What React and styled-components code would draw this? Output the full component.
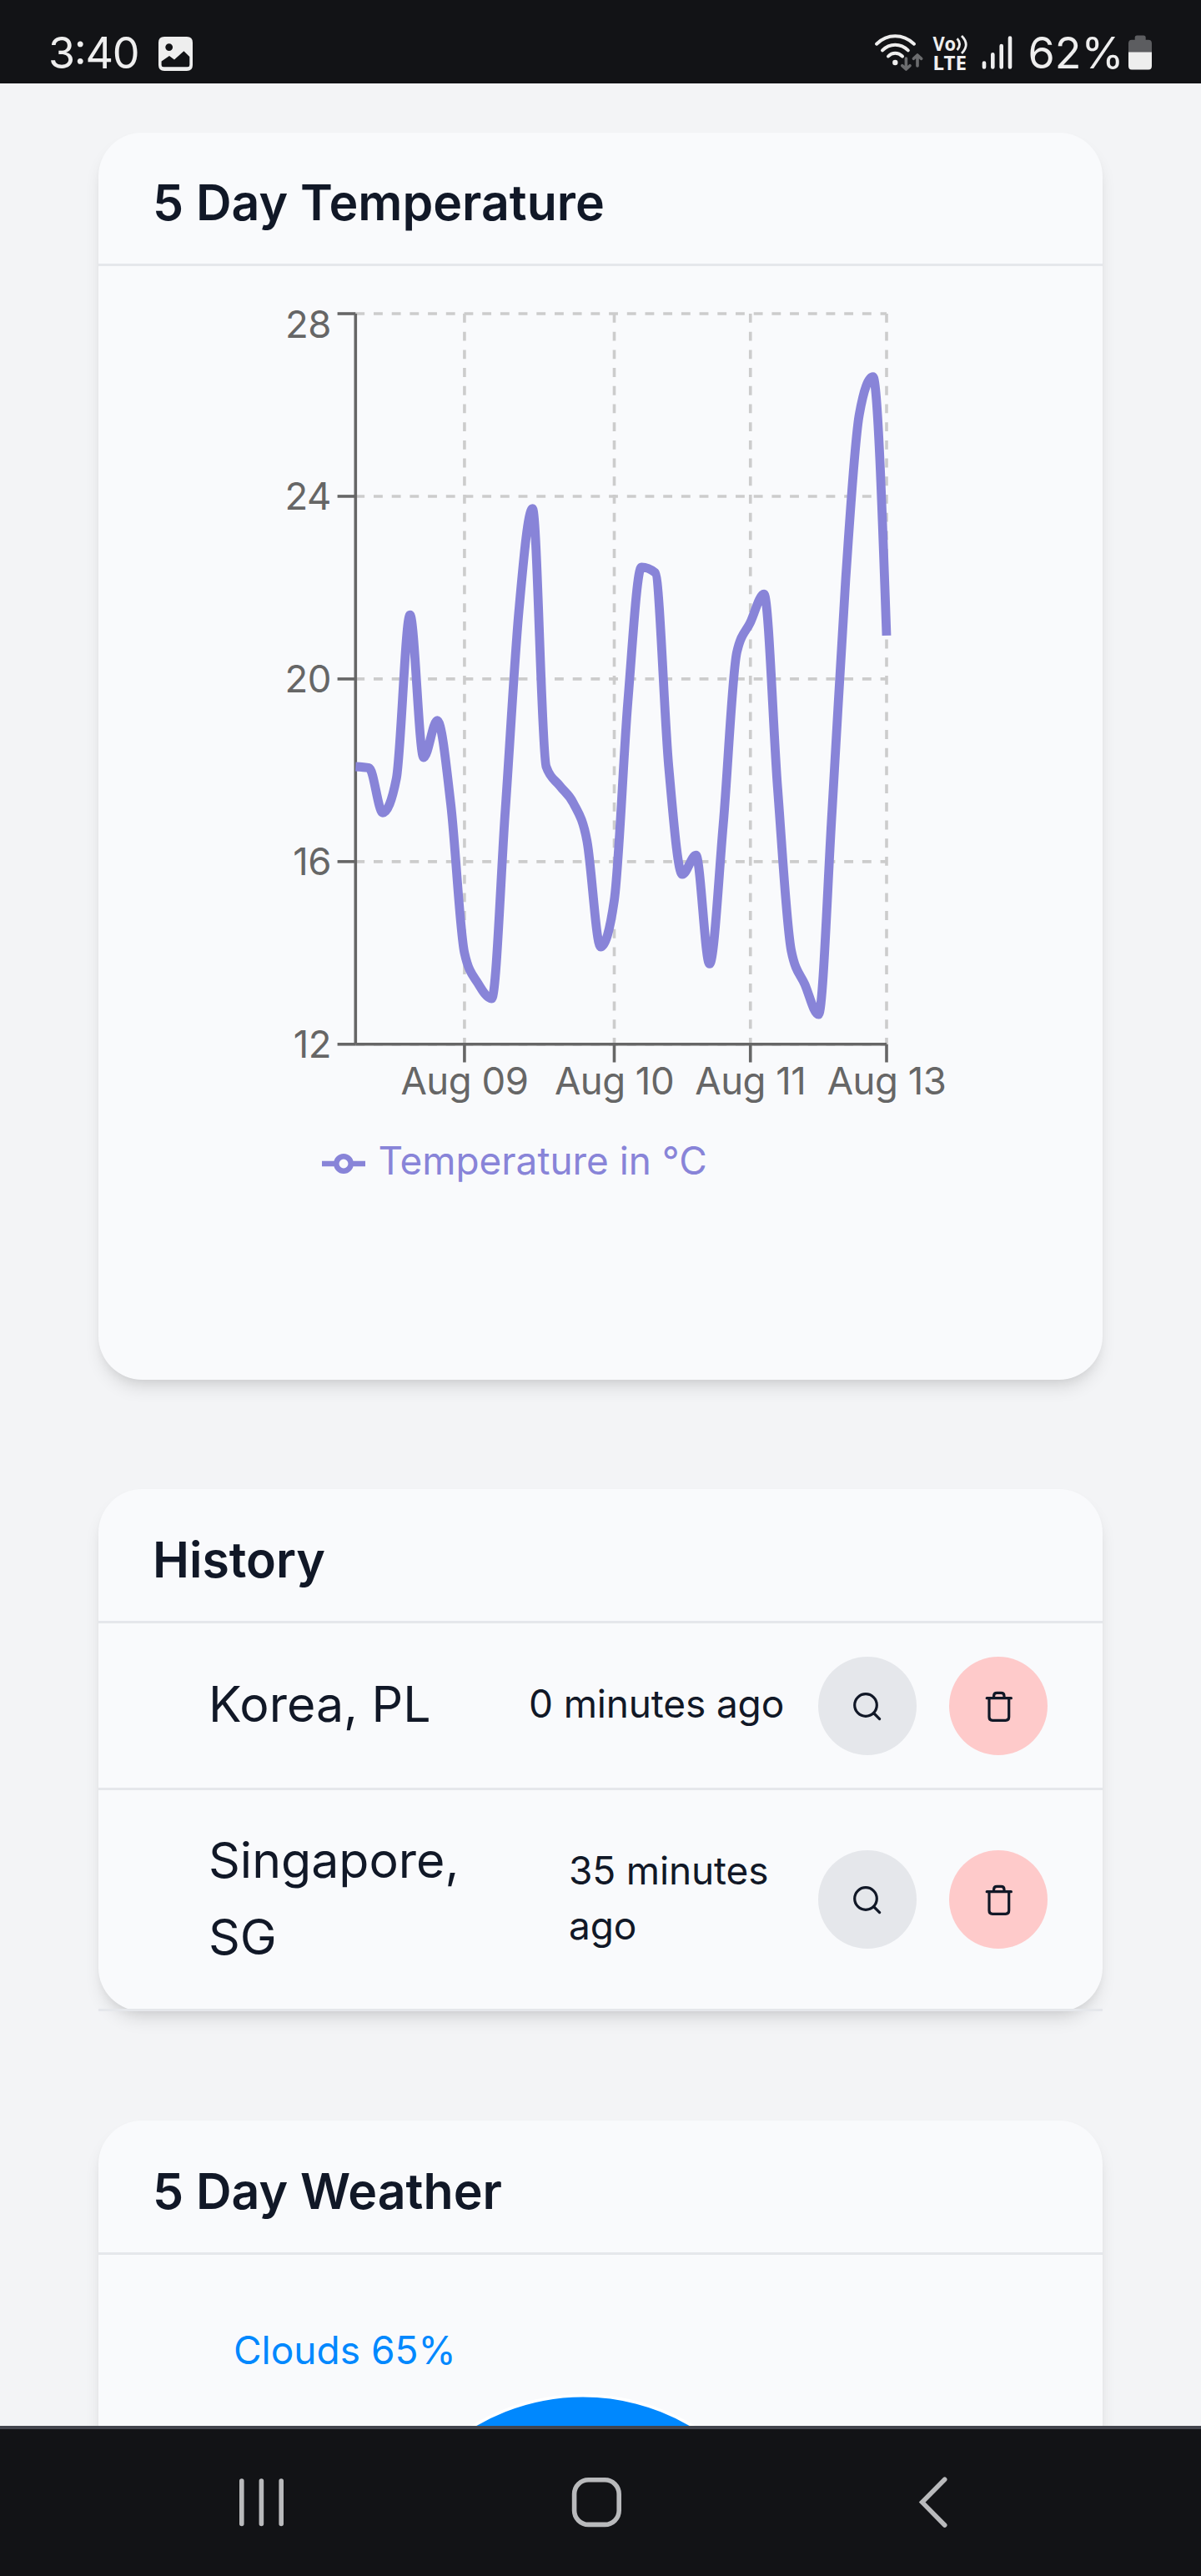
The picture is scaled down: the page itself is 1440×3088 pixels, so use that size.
import React from "react";
import styled, { createGlobalStyle } from "styled-components";

const GlobalStyle = createGlobalStyle`
  *, *::before, *::after { box-sizing: border-box; }
  body {
    margin: 0;
    background: #f3f4f6;
    font-family: Inter, "Liberation Sans", sans-serif;
    color: #111827;
  }
`;

const Screen = styled.div`
  display: flex;
  flex-direction: column;
  width: 1440px;
  height: 3088px;
  overflow: hidden;
  background: #f3f4f6;
`;

const StatusBar = styled.header`
  display: flex;
  justify-content: space-between;
  flex: none;
  height: 100px;
  background: #121316;
`;

const StatusIcons = styled.svg`
  display: block;
  height: 100px;
  width: ${(p) => p.$width}px;
`;

const Content = styled.main`
  flex: 1;
  min-height: 0;
  overflow: hidden;
  display: flex;
  flex-direction: column;
  gap: 131px;
  padding: 59px 118px 0;
`;

const Card = styled.section`
  flex: none;
  height: ${(p) => p.$height}px;
  border-radius: 52.5px;
  background: #f9fafc;
  box-shadow: 0 13px 20px -3px rgba(0, 0, 0, 0.1),
    0 7px 13px -7px rgba(0, 0, 0, 0.1);
`;

const CardTitle = styled.h2`
  margin: 0;
  height: ${(p) => (p.$tall ? 161 : 160)}px;
  padding: ${(p) => (p.$tall ? 39 : 38)}px 65px 0;
  border-bottom: 3px solid #e5e7eb;
  font-size: 59px;
  line-height: 92px;
  font-weight: 600;
`;

const Plot = styled.svg`
  display: block;
  width: 100%;
  height: ${(p) => p.$height}px;
`;

const HistoryRow = styled.div`
  display: flex;
  align-items: center;
  height: ${(p) => p.$height}px;
  padding: 0 66px 0 132px;
  border-bottom: 3px solid #e5e7eb;
`;

const Place = styled.div`
  width: ${(p) => p.$width}px;
  margin-right: auto;
  padding-bottom: 3px;
  font-size: 59px;
  line-height: 92px;
`;

const Ago = styled.div`
  width: ${(p) => p.$width}px;
  margin-right: 39px;
  padding-bottom: 5px;
  font-size: 46px;
  line-height: 66px;
  letter-spacing: -0.15px;
`;

const Actions = styled.div`
  display: flex;
  gap: 39px;
`;

const RoundButton = styled.button`
  display: block;
  width: 118px;
  height: 118px;
  padding: 0;
  border: 0;
  border-radius: 50%;
  background: ${(p) => (p.$danger ? "#fecaca" : "#e5e7eb")};
`;

const ButtonIcon = styled.svg`
  display: block;
  width: 118px;
  height: 118px;
  fill: none;
  stroke: #111827;
  stroke-width: 3.2;
  stroke-linecap: round;
  stroke-linejoin: round;
`;

const NavBar = styled.nav`
  flex: none;
  height: 180px;
  border-top: 4px solid #42444d;
  background: #121316;
`;

const temps = [
  18.08, 18.05, 17.07, 17.82, 21.4, 18.28, 19.09, 17.24, 14.0, 13.33, 13.0,
  17.13, 21.5, 23.73, 18.08, 17.66, 17.28, 16.45, 14.13, 15.15, 19.5, 22.45,
  22.33, 18.08, 15.72, 16.14, 13.76, 16.8, 20.58, 21.24, 21.86, 17.6, 14.05,
  13.31, 12.65, 17.13, 22.2, 25.8, 26.62, 20.95,
];

const area = { left: 426.3, right: 1063, top: 376, bottom: 1251.8 };
const xAt = (i) =>
  area.left + ((area.right - area.left) * i) / (temps.length - 1);
const yAt = (t) => area.top + ((28 - t) / 16) * (area.bottom - area.top);

// Cubic path whose tangents keep every segment monotone.
function monotonePath(points) {
  const n = points.length;
  const h = [];
  const s = [];
  for (let i = 0; i < n - 1; i++) {
    h.push(points[i + 1][0] - points[i][0]);
    s.push((points[i + 1][1] - points[i][1]) / h[i]);
  }
  const m = new Array(n).fill(0);
  for (let i = 1; i < n - 1; i++) {
    const p = (s[i - 1] * h[i] + s[i] * h[i - 1]) / (h[i - 1] + h[i]);
    m[i] =
      (Math.sign(s[i - 1]) + Math.sign(s[i])) *
        Math.min(Math.abs(s[i - 1]), Math.abs(s[i]), 0.5 * Math.abs(p)) || 0;
  }
  m[0] = (3 * s[0] - m[1]) / 2;
  m[n - 1] = (3 * s[n - 2] - m[n - 2]) / 2;
  let d = `M${points[0][0]},${points[0][1]}`;
  for (let i = 0; i < n - 1; i++) {
    const k = h[i] / 3;
    const [x0, y0] = points[i];
    const [x1, y1] = points[i + 1];
    d += `C${x0 + k},${y0 + k * m[i]},${x1 - k},${y1 - k * m[i + 1]},${x1},${y1}`;
  }
  return d;
}

const yTicks = [
  { value: 28, base: 404.8 },
  { value: 24, base: 610.8 },
  { value: 20, base: 829.7 },
  { value: 16, base: 1048.7 },
  { value: 12, base: 1268 },
];

const xTicks = [
  { label: "Aug 09", i: 8 },
  { label: "Aug 10", i: 19 },
  { label: "Aug 11", i: 29 },
  { label: "Aug 13", i: 39 },
];

function TemperatureChart() {
  const line = monotonePath(temps.map((t, i) => [xAt(i), yAt(t)]));
  return (
    <Plot $height={1335} viewBox="118 319 1204 1335">
      <g stroke="#ccc" strokeWidth="3.6" strokeDasharray="10.85 10.85">
        {yTicks.map(({ value }) => (
          <line key={value} x1={area.left} x2={area.right} y1={yAt(value)} y2={yAt(value)} />
        ))}
        {xTicks.map(({ i }) => (
          <line key={i} x1={xAt(i)} x2={xAt(i)} y1={area.top} y2={area.bottom} />
        ))}
      </g>
      <g stroke="#666" strokeWidth="3.6">
        <line x1={area.left} x2={area.left} y1={area.top} y2={area.bottom} />
        <line x1={area.left} x2={area.right} y1={area.bottom} y2={area.bottom} />
        {yTicks.map(({ value }) => (
          <line key={value} x1={area.left - 21.7} x2={area.left} y1={yAt(value)} y2={yAt(value)} />
        ))}
        {xTicks.map(({ i }) => (
          <line key={i} x1={xAt(i)} x2={xAt(i)} y1={area.bottom} y2={area.bottom + 21.7} />
        ))}
      </g>
      <g fill="#666" fontSize="45.5" letterSpacing="-0.5">
        {yTicks.map(({ value, base }) => (
          <text key={value} x="397" y={base} textAnchor="end">{value}</text>
        ))}
        {xTicks.map(({ label, i }) => (
          <text key={i} x={xAt(i)} y="1311.6" textAnchor="middle">{label}</text>
        ))}
      </g>
      <path d={line} fill="none" stroke="#8884d8" strokeWidth="10.8" />
      <g stroke="#8884d8" strokeWidth="6.5" fill="none">
        <path d="M386 1395H403.3M420.7 1395H438" />
        <circle cx="412" cy="1395" r="8.7" />
      </g>
      <text x="453.5" y="1407.5" fontSize="45.9" fill="#8884d8">Temperature in °C</text>
    </Plot>
  );
}

function WeatherChart() {
  return (
    <Plot $height={400} viewBox="118 2703 1204 400">
      <circle cx="699" cy="3126.7" r="255" fill="#0088fe" stroke="#fff" strokeWidth="3.6" />
      <text x="280" y="2833.7" fontSize="46" fill="#0088fe">Clouds 65%</text>
    </Plot>
  );
}

function SearchIcon() {
  return (
    <ButtonIcon viewBox="0 0 118 118">
      <circle cx="57" cy="58" r="13.3" />
      <path d="M67 68L73.6 74.6" />
    </ButtonIcon>
  );
}

function TrashIcon() {
  return (
    <ButtonIcon viewBox="0 0 118 118">
      <path d="M45.2 49.7H74.4M48 49.7V72.3Q48 76.3 52 76.3H67.7Q71.7 76.3 71.7 72.3V49.7M53.6 49.7V47Q53.6 43.3 57.3 43.3H62.3Q66 43.3 66 47V49.7" />
    </ButtonIcon>
  );
}

const history = [
  { place: "Korea, PL", placeWidth: 300, ago: "0 minutes ago", agoWidth: 308, height: 200 },
  { place: "Singapore, SG", placeWidth: 330, ago: "35 minutes ago", agoWidth: 260, height: 265 },
];

export default function App() {
  return (
    <Screen>
      <GlobalStyle />
      <StatusBar>
        <StatusIcons $width={400} viewBox="0 0 400 100" fill="#eee">
          <text x="58" y="82" fontSize="52" textLength="109.5">3:40</text>
          <path
            fillRule="evenodd"
            d="M197 44H224Q231 44 231 51V78Q231 85 224 85H197Q190 85 190 78V51Q190 44 197 44ZM193.6 73.5V78Q193.6 80.3 196 80.3H225Q227.3 80.3 227.3 78V68L220.4 61.3L209 71.5L203 67ZM202.7 52.2A4.4 4.4 0 1 0 202.7 61A4.4 4.4 0 1 0 202.7 52.2Z"
          />
        </StatusIcons>
        <StatusIcons $width={440} viewBox="1000 0 440 100" fill="#eee">
          <g fill="none" stroke="#eee" strokeWidth="4" strokeLinecap="round">
            <path d="M1051 52.7Q1060.8 43.3 1073.3 43.3T1096 52.7" />
            <path d="M1058 60.3Q1064.5 53.7 1073.3 53.7T1088.8 60.3" />
            <path d="M1065 67.5Q1068.5 63.8 1073.3 63.8T1082 67.5" />
          </g>
          <circle cx="1073.3" cy="75" r="3.2" />
          <g fill="none" stroke="#6b6c6e" strokeWidth="3.6" strokeLinecap="round" strokeLinejoin="round">
            <path d="M1086.4 70V82.5M1081.7 78.7L1086.4 83L1091 78.7" />
            <path d="M1100 79V66.5M1095.4 70.3L1100 66L1104.7 70.3" />
          </g>
          <text fontFamily="'Noto Sans', 'Open Sans', sans-serif" fontWeight="700" fontSize="23">
            <tspan x="1118.6" y="60.6" textLength="27.5" lengthAdjust="spacingAndGlyphs">Vo</tspan>
            <tspan x="1118.6" y="84.4" textLength="40.5" lengthAdjust="spacingAndGlyphs">LTE</tspan>
          </text>
          <g fill="none" stroke="#eee" strokeWidth="2.8">
            <path d="M1147.6 46.3Q1153.6 53 1147.6 60" />
            <path d="M1153 43Q1163.5 53.5 1153 64" />
          </g>
          <g stroke="#eee" strokeWidth="4.6" strokeLinecap="round">
            <path d="M1180 75.6V80.4M1190.3 65.2V80.4M1200.7 55V80.4M1211 45.6V80.4" />
          </g>
          <text x="1232.5" y="82" fontSize="52.5" textLength="115" lengthAdjust="spacingAndGlyphs">62%</text>
          <path fill="#5c5d60" d="M1353 63V52Q1353 47.7 1357 47.7H1360.7V45Q1360.7 42.5 1363.2 42.5H1371.2Q1373.7 42.5 1373.7 45V47.7H1377Q1381 47.7 1381 52V63Z" />
          <path d="M1353 62.6H1381V79Q1381 83.6 1377 83.6H1357Q1353 83.6 1353 79Z" />
        </StatusIcons>
      </StatusBar>

      <Content>
        <Card $height={1495}>
          <CardTitle>5 Day Temperature</CardTitle>
          <TemperatureChart />
        </Card>

        <Card $height={626}>
          <CardTitle $tall>History</CardTitle>
          {history.map((h) => (
            <HistoryRow key={h.place} $height={h.height}>
              <Place $width={h.placeWidth}>{h.place}</Place>
              <Ago $width={h.agoWidth}>{h.ago}</Ago>
              <Actions>
                <RoundButton aria-label="Search"><SearchIcon /></RoundButton>
                <RoundButton aria-label="Delete" $danger><TrashIcon /></RoundButton>
              </Actions>
            </HistoryRow>
          ))}
        </Card>

        <Card $height={1200}>
          <CardTitle $tall>5 Day Weather</CardTitle>
          <WeatherChart />
        </Card>
      </Content>

      <NavBar>
        <Plot $height={176} viewBox="0 2912 1440 176">
          <g fill="none" stroke="#b9babc" strokeWidth="5.6" strokeLinecap="round">
            <path d="M289.8 2974V3025.5M313.4 2974V3025.5M337.2 2974V3025.5" />
            <rect x="688.6" y="2972.8" width="53.6" height="53.6" rx="17" />
            <path d="M1132.7 2972.3L1105.7 2999.6L1132.7 3027" />
          </g>
        </Plot>
      </NavBar>
    </Screen>
  );
}
